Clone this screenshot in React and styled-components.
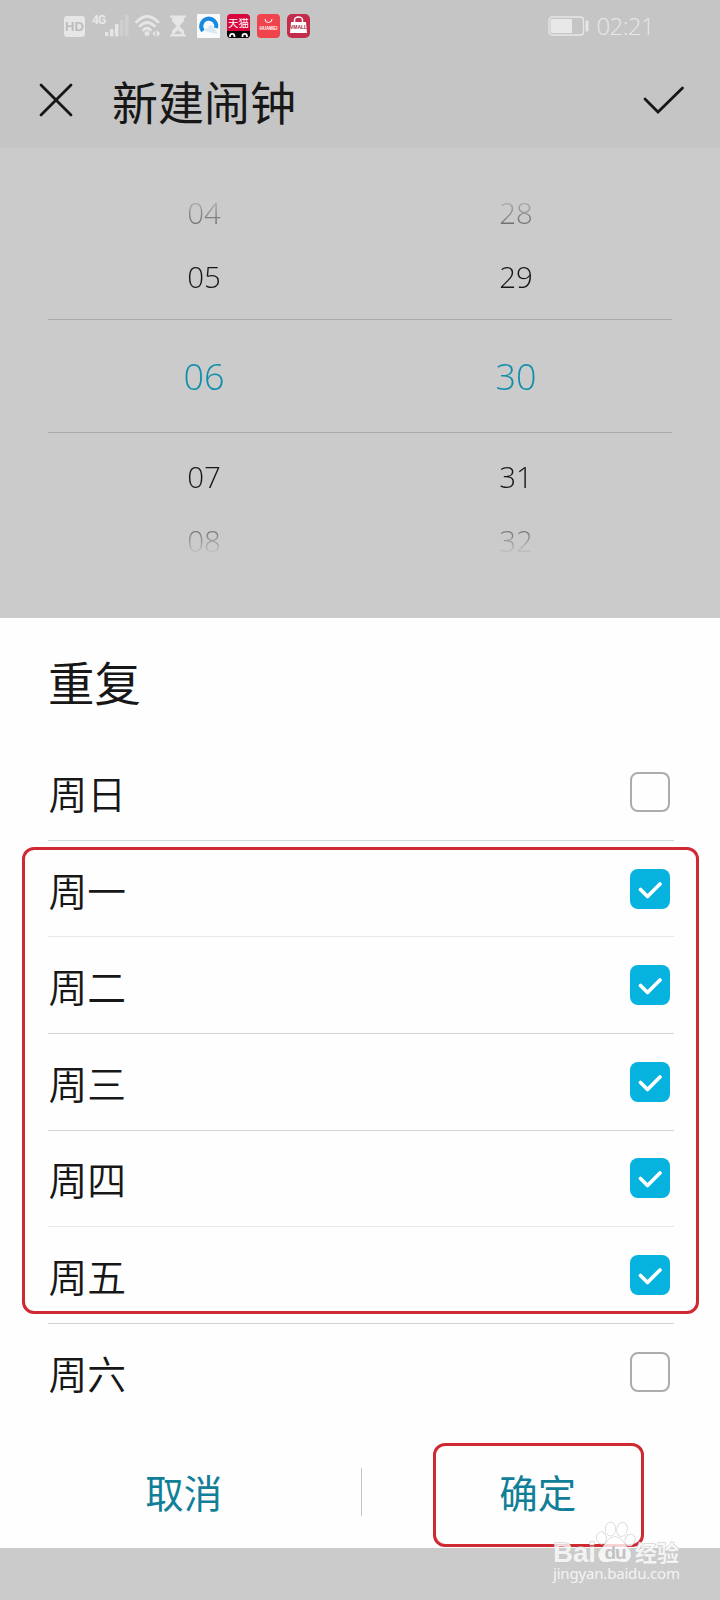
import React from 'react';
import styled, { createGlobalStyle, css } from 'styled-components';

const GlobalStyle = createGlobalStyle`
  * { box-sizing: border-box; }
  body {
    margin: 0;
    background: #cbcbcb;
    font-family: "Noto Sans", "Noto Sans CJK SC", sans-serif;
    color: #171717;
  }
  button { font-family: inherit; }
`;

const Screen = styled.main`
  position: relative;
  display: flex;
  flex-direction: column;
  width: 720px;
  height: 1600px;
  overflow: hidden;
  background: #cbcbcb;
`;

const Header = styled.header`
  height: 148px;
  background: #c5c5c5;
`;

const StatusBar = styled.div`
  display: flex;
  align-items: center;
  justify-content: space-between;
  height: 52px;
  padding: 0 66px 0 64px;
`;

const StatusGroup = styled.div`
  display: flex;
  align-items: center;
`;

const HdBadge = styled.span`
  width: 21px;
  height: 21px;
  border-radius: 3px;
  background: #e6e6e6;
  color: #bdbdbd;
  font: 700 13px/21px "Liberation Sans", sans-serif;
  text-align: center;
`;

const NetworkLabel = styled.span`
  width: 13px;
  margin: 0 0 0 7px;
  align-self: flex-start;
  color: #e8e8e8;
  font: 700 12px/13px "Roboto", sans-serif;
  letter-spacing: -1px;
`;

const Glyph = styled.svg`
  display: block;
  flex: none;
  margin-left: ${({ $gap = 0 }) => $gap}px;
`;

const AppIcon = styled.span`
  display: flex;
  justify-content: center;
  flex: none;
  width: 23px;
  height: 24px;
  margin-left: ${({ $gap = 7 }) => $gap}px;
  border-radius: ${({ $radius = 4 }) => $radius}px;
  background: ${({ $bg }) => $bg};
  overflow: hidden;
`;

const Clock = styled.time`
  margin-left: 7px;
  color: #e8e8e8;
  font: 300 24px/30px "Open Sans", sans-serif;
  letter-spacing: -0.6px;
`;

const TitleBar = styled.div`
  display: flex;
  align-items: center;
  height: 96px;
  padding: 0 34px 0 38px;
`;

const IconButton = styled.button`
  display: flex;
  padding: 0;
  border: 0;
  background: none;
`;

const Title = styled.h1`
  flex: 1;
  margin: 3px 0 0 38px;
  font-size: 46px;
  line-height: 60px;
  font-weight: 400;
`;

const Picker = styled.section`
  display: grid;
  grid-template-columns: 1fr 1fr;
  grid-template-rows: 64px 74px 114px 76px 64px;
  margin: 33px 48px 0;
  mask-image: linear-gradient(to bottom, transparent 10px, #000 74px, #000 322px, transparent 374px);
`;

const PickerCell = styled.div`
  display: flex;
  align-items: center;
  justify-content: center;
  font: 340 29.5px/40px "Open Sans", sans-serif;
  ${({ $kind }) => $kind === 'selected' && css`
    border-top: 1px solid #aaaaaa;
    border-bottom: 1px solid #aaaaaa;
    color: #0d8fab;
    font-size: 36px;
    padding-top: 1px;
  `}
  ${({ $kind }) => $kind === 'above' && css`padding-bottom: 10px;`}
  ${({ $kind }) => $kind === 'below' && css`padding-top: 11px;`}
`;

const Sheet = styled.section`
  display: flex;
  flex-direction: column;
  height: 930px;
  margin-top: 45px;
  padding: 35px 46px 0 48px;
  background: #fefefe;
`;

const SheetTitle = styled.h2`
  margin: 0 0 10px;
  font-size: 46.4px;
  line-height: 60px;
  font-weight: 400;
`;

const DayList = styled.div`
  display: flex;
  flex-direction: column;
  padding-top: 21.3px;
`;

const DayRow = styled.label`
  display: flex;
  align-items: center;
  justify-content: space-between;
  height: 96.6px;
  padding-right: 4px;
  border-bottom: ${({ $line }) => ($line ? `1px solid ${$line}` : 0)};
`;

const DayName = styled.span`
  margin: 4px 0 0 0.5px;
  font-size: 38.8px;
  line-height: 50px;
  font-weight: 350;
`;

const CheckBox = styled.span`
  display: flex;
  align-items: center;
  justify-content: center;
  width: 40px;
  height: 40px;
  border-radius: 8px;
  border: ${({ $on }) => ($on ? 0 : '2px solid #acacac')};
  background: ${({ $on }) => ($on ? '#06b3df' : 'transparent')};
`;

const Actions = styled.footer`
  display: grid;
  grid-template-columns: 1fr 1px 1fr;
  align-items: center;
  margin: 46px 0 0;
`;

const Action = styled.button`
  padding: ${({ $side }) => ($side === 'left' ? '2px 41px 0 0' : '2px 0 0 40px')};
  border: 0;
  background: none;
  color: #117f97;
  font-size: 38.5px;
  line-height: 50px;
`;

const Separator = styled.span`
  height: 48px;
  background: #c4c4c4;
`;

const Highlight = styled.div`
  position: absolute;
  border: 3px solid #cf2a31;
  border-radius: 12px;
  ${({ $target }) => $target === 'days'
    ? css`left: 22px; top: 847px; width: 677px; height: 467px;`
    : css`left: 433px; top: 1443px; width: 211px; height: 104px;`}
`;

const Watermark = styled.svg`
  position: absolute;
  left: 545px;
  top: 1515px;
`;

const STRONG = '#d2d5d5';
const FAINT = '#e8e8e8';

const DAYS = [
  ['周日', false, STRONG],
  ['周一', true, FAINT],
  ['周二', true, STRONG],
  ['周三', true, STRONG],
  ['周四', true, FAINT],
  ['周五', true, STRONG],
  ['周六', false, null],
];

const TIMES = [
  ['04', '28', 'edge'],
  ['05', '29', 'above'],
  ['06', '30', 'selected'],
  ['07', '31', 'below'],
  ['08', '32', 'edge'],
];

function StatusIcons() {
  return (
    <StatusGroup>
      <HdBadge>HD</HdBadge>
      <NetworkLabel>4G</NetworkLabel>
      <Glyph width="24" height="24" viewBox="0 0 24 24">
        <g fill="#e6e6e6">
          <rect x="0" y="18" width="3.5" height="4" rx="1" />
          <rect x="5" y="15" width="3.5" height="7.500" rx="1" />
          <rect x="10" y="10" width="3.5" height="12.500" rx="1" />
          <g opacity=".3">
            <rect x="15" y="6" width="3.5" height="16.500" rx="1" />
            <rect x="20" y="1" width="3.5" height="21.500" rx="1" />
          </g>
        </g>
      </Glyph>
      <Glyph $gap={5} width="27" height="24" viewBox="0 0 27 24">
        <g fill="none" stroke="#e6e6e6" strokeWidth="2.800" strokeLinecap="round">
          <path d="M2.500 8Q13 -3 24 8M6 12Q13 5 20.500 12M9.500 16Q13 12.500 16.500 16" />
        </g>
        <circle cx="13" cy="19.500" r="2.500" fill="#e6e6e6" />
        <path d="m18.500 19.500 2.500-3v6zm4-3.500 4 3.500-4 3.500z" fill="#e6e6e6" />
      </Glyph>
      <Glyph $gap={8} width="18" height="24" viewBox="0 0 18 24">
        <path d="M1 2.500h16M1 21.500h16" stroke="#e6e6e6" strokeWidth="2" />
        <path d="M3 3v4l4.500 5L3 17v5h12v-5l-4.500-5L15 7V3z" fill="#e6e6e6" />
        <path d="m5 20 4-4 4 4z" fill="#c5c5c5" />
      </Glyph>
      <AppIcon $gap={10} $bg="#fafafa" $radius={1}>
        <svg width="23" height="24" viewBox="0 0 23 24">
          <path d="M6 17A7.500 7.500 0 1 1 19 14" fill="none" stroke="#158ae0" strokeWidth="4" />
          <path d="M8 17q0-3 3-3 1-5 5-2l5 8q-7-1-13-3z" fill="#d8e9f5" />
        </svg>
      </AppIcon>
      <AppIcon $bg="#d9063d">
        <svg width="23" height="24" viewBox="0 0 23 24">
          <rect y="17" width="23" height="7" fill="#0d0808" />
          <text x="11.500" y="13" textAnchor="middle" fontSize="10.500" fill="#fff" fontFamily="Noto Sans CJK SC, sans-serif">天猫</text>
          <path d="M3 23v-1a2.200 2.200 0 0 1 4.400 0v1M15.500 23v-1a2.200 2.200 0 0 1 4.400 0v1" fill="none" stroke="#fff" strokeWidth="1.800" />
        </svg>
      </AppIcon>
      <AppIcon $bg="#f0444c">
        <svg width="23" height="24" viewBox="0 0 23 24">
          <path d="M8 5a3.500 3.500 0 0 0 7 0" fill="none" stroke="#fff" />
          <text x="2.500" y="15.500" textLength="18" fontSize="4.500" fontWeight="700" fill="#fff" fontFamily="Liberation Sans, sans-serif">HUAWEI</text>
        </svg>
      </AppIcon>
      <AppIcon $bg="#c42c4b" $radius={5}>
        <svg width="23" height="24" viewBox="0 0 23 24">
          <path d="M7.500 9V6a4 3 0 0 1 8 0v3" fill="none" stroke="#fff" strokeWidth="1.500" />
          <path d="M4 8h15l1 11H3z" fill="#fff" />
          <text x="11.500" y="14.500" textAnchor="middle" fontSize="5" fontWeight="700" fill="#a82643" fontFamily="Liberation Sans, sans-serif">VMALL</text>
        </svg>
      </AppIcon>
    </StatusGroup>
  );
}

function BaiduMark() {
  return (
    <Watermark width="150" height="80" viewBox="0 0 150 80" aria-label="Baidu 经验">
      <g fill="#fff" fillOpacity=".8" stroke="#c9c9c9" strokeWidth="1" paintOrder="stroke">
        <ellipse cx="56.500" cy="23" rx="4.800" ry="6" transform="rotate(-12 56.500 23)" />
        <ellipse cx="65.500" cy="14" rx="5" ry="6.800" />
        <ellipse cx="77" cy="14.500" rx="5" ry="6.800" transform="rotate(12 77 14.500)" />
        <ellipse cx="85" cy="25" rx="4.800" ry="6" transform="rotate(22 85 25)" />
        <path d="M70 22c7 0 9 7 13 11 6 6 2 15-5 14-6-1-10-1-16 0-8 1-12-8-5-14 4-4 6-11 13-11Z" />
        <g fontFamily="Liberation Sans, sans-serif" fontWeight="700">
          <text x="8" y="46.500" fontSize="28" textLength="43" lengthAdjust="spacingAndGlyphs">Bai</text>
          <text x="59.500" y="44" fontSize="19" textLength="22" fill="#c2c2c2" fillOpacity="1" stroke="none">du</text>
        </g>
        <text x="90" y="46" fontFamily="Noto Sans CJK SC, sans-serif" fontWeight="700" fontSize="22" textLength="44">经验</text>
        <text x="8" y="64" fontFamily="Noto Sans, sans-serif" fontSize="15" textLength="127" stroke="none">jingyan.baidu.com</text>
      </g>
    </Watermark>
  );
}

export default function App() {
  return (
    <Screen>
      <GlobalStyle />
      <Header>
        <StatusBar>
          <StatusIcons />
          <StatusGroup>
            <Glyph width="41" height="20" viewBox="0 0 41 20">
              <rect x="1" y="1" width="34.500" height="18" rx="3" fill="none" stroke="#e6e6e6" strokeWidth="1.300" />
              <rect x="2.500" y="3" width="21.500" height="14" rx="1" fill="#e8e8e8" />
              <rect x="37.500" y="4.500" width="3" height="11" rx="1" fill="#e6e6e6" />
            </Glyph>
            <Clock>02:21</Clock>
          </StatusGroup>
        </StatusBar>
        <TitleBar>
          <IconButton aria-label="关闭">
            <svg width="36" height="36" viewBox="0 0 36 36">
              <path d="m3 3 30 30M33 3 3 33" stroke="#171717" strokeWidth="2.800" strokeLinecap="round" />
            </svg>
          </IconButton>
          <Title>新建闹钟</Title>
          <IconButton aria-label="完成">
            <svg width="44" height="36" viewBox="0 0 44 36">
              <path d="m3 17 13 13L40.500 6" fill="none" stroke="#171717" strokeWidth="2.800" strokeLinecap="round" />
            </svg>
          </IconButton>
        </TitleBar>
      </Header>
      <Picker>
        {TIMES.map(([hour, minute, kind]) => (
          <React.Fragment key={hour}>
            <PickerCell $kind={kind}>{hour}</PickerCell>
            <PickerCell $kind={kind}>{minute}</PickerCell>
          </React.Fragment>
        ))}
      </Picker>
      <Sheet>
        <SheetTitle>重复</SheetTitle>
        <DayList>
          {DAYS.map(([name, on, line]) => (
            <DayRow key={name} $line={line}>
              <DayName>{name}</DayName>
              <CheckBox $on={on}>
                {on && (
                  <svg width="26" height="20" viewBox="0 0 26 20">
                    <path d="m3.500 10.500 7 7L23 5" fill="none" stroke="#fff" strokeWidth="3.700" strokeLinecap="round" strokeLinejoin="round" />
                  </svg>
                )}
              </CheckBox>
            </DayRow>
          ))}
        </DayList>
        <Actions>
          <Action $side="left">取消</Action>
          <Separator />
          <Action $side="right">确定</Action>
        </Actions>
      </Sheet>
      <Highlight $target="days" />
      <Highlight $target="confirm" />
      <BaiduMark />
    </Screen>
  );
}
